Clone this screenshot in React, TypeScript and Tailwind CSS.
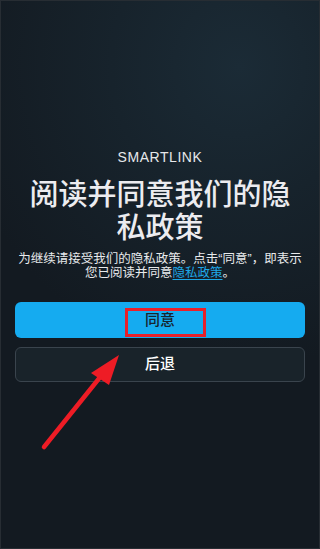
import React from "react";

const App: React.FC = () => {
  return (
    <div
      className="relative h-[549px] w-[320px] overflow-hidden border border-[#272d33] bg-[#131a21] bg-[radial-gradient(ellipse_90%_55%_at_75%_12%,#1b2b36_0%,#17232c_45%,#131a21_100%)]"
      style={{ fontFamily: '"Liberation Sans", "Noto Sans CJK SC", sans-serif' }}
    >
      <div className="flex flex-col items-center pt-[148px]">
        <div className="text-[14px] leading-[16px] tracking-[0.04em] text-[#e6e8ea]">
          SMARTLINK
        </div>
        <h1 className="mt-[14px] w-[280px] text-center text-[29px] leading-[33px] font-medium text-[#ececf0]">
          阅读并同意我们的隐私政策
        </h1>
        <p className="mt-[7px] w-[290px] text-center text-[12.5px] leading-[14px] text-[#e8eaec]">
          为继续请接受我们的隐私政策。点击“同意”，即表示您已阅读并同意
          <span className="text-[#1ea7e6] underline underline-offset-2">隐私政策</span>。
        </p>
      </div>

      <div className="mt-[22px] flex flex-col gap-[9px] px-[14px]">
        <button className="h-[36px] w-full rounded-[6px] bg-[#15abf0] text-[15px] font-medium text-[#17242d]">
          同意
        </button>
        <button className="h-[35px] w-full rounded-[6px] border border-[#3a444d] bg-[#19232a] text-[15px] font-medium text-white">
          后退
        </button>
      </div>

      {/* annotation: red box + arrow */}
      <div className="pointer-events-none absolute left-[124px] top-[307px] h-[29px] w-[81px] border-[3px] border-[#e8202a]" />
      <svg
        className="pointer-events-none absolute left-0 top-0"
        width="320"
        height="549"
        viewBox="0 0 320 549"
      >
        <line
          x1="43"
          y1="446"
          x2="100"
          y2="375"
          stroke="#ee1c25"
          strokeWidth="4.5"
          strokeLinecap="round"
        />
        <polygon points="118,354 90,372 108,384" fill="#ee1c25" />
      </svg>
    </div>
  );
};

export default App;
